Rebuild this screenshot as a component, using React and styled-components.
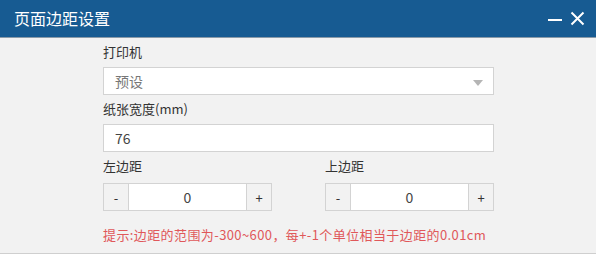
import styled, { createGlobalStyle } from "styled-components"

const Global = createGlobalStyle`
    html, body {
        margin: 0;
        padding: 0;
        background: #f2f2f2;
    }
    * {
        box-sizing: border-box;
    }
`

const Dialog = styled.div`
    width: 596px;
    height: 254px;
    background: #f2f2f2;
    font-family: "Microsoft YaHei", "Noto Sans CJK SC", sans-serif;
    display: flex;
    flex-direction: column;
`
const Header = styled.div`
    height: 38px;
    background: #175b92;
    border-bottom: 1px solid #8a9aa8;
    display: flex;
    align-items: center;
    justify-content: space-between;
    padding: 0 11px 0 14px;
    color: #fff;
`
const Title = styled.span`
    font-size: 16px;
    line-height: 20px;
    margin-top: -2px;
`
const Tools = styled.div`
    display: flex;
    align-items: center;
    gap: 8px;
`
const Body = styled.div`
    flex: 1;
    padding: 5px 0 0 103px;
    border-bottom: 1px solid #cfcfcf;
`
const Form = styled.div`
    width: 391px;
    display: flex;
    flex-direction: column;
`
const Label = styled.div`
    font-size: 13px;
    color: #333;
    line-height: 18px;
    height: 18px;
    margin-bottom: ${p => (p.$gap ? p.$gap : "6px")};
`
const Field = styled.div`
    position: relative;
    height: 28px;
    background: #fff;
    border: 1px solid #d3d3d3;
    display: flex;
    align-items: center;
    padding-left: 11px;
    font-size: 14px;
    color: ${p => (p.$muted ? "#777" : "#444")};
    margin-bottom: 5px;
`
const Arrow = styled.span`
    position: absolute;
    right: 10px;
    top: 12px;
    width: 0;
    height: 0;
    border-left: 5px solid transparent;
    border-right: 5px solid transparent;
    border-top: 6px solid #b5b5b5;
`
const Row = styled.div`
    display: flex;
    justify-content: space-between;
`
const Col = styled.div`
    width: 169px;
    display: flex;
    flex-direction: column;
`
const Stepper = styled.div`
    height: 28px;
    display: flex;
    border: 1px solid #d3d3d3;
    background: #fff;
`
const StepBtn = styled.div`
    width: 25px;
    background: #f2f2f2;
    display: flex;
    align-items: center;
    justify-content: center;
    font-size: 13px;
    color: #333;
    border-${p => (p.$side === "left" ? "right" : "left")}: 1px solid #d3d3d3;
`
const StepValue = styled.div`
    flex: 1;
    display: flex;
    align-items: center;
    justify-content: center;
    font-size: 14px;
    color: #444;
`
const Hint = styled.div`
    margin-top: 15px;
    font-size: 13px;
    letter-spacing: 0.4px;
    color: #e0585a;
    line-height: 18px;
    white-space: nowrap;
`

const MarginStepper = ({ label, value }) => (
    <Col>
        <Label $gap="8px">{label}</Label>
        <Stepper>
            <StepBtn $side="left">-</StepBtn>
            <StepValue>{value}</StepValue>
            <StepBtn $side="right">+</StepBtn>
        </Stepper>
    </Col>
)

export default function App() {
    return (
        <Dialog>
            <Global />
            <Header>
                <Title>页面边距设置</Title>
                <Tools>
                    <svg width="14" height="14" viewBox="0 0 14 14">
                        <path d="M0 8h14" stroke="#fff" strokeWidth="2" />
                    </svg>
                    <svg width="15" height="15" viewBox="0 0 15 15">
                        <path d="M1.5 1.5l12 12M13.5 1.5l-12 12" stroke="#fff" strokeWidth="2" />
                    </svg>
                </Tools>
            </Header>
            <Body>
                <Form>
                    <Label>打印机</Label>
                    <Field $muted>
                        预设
                        <Arrow />
                    </Field>
                    <Label>纸张宽度(mm)</Label>
                    <Field>76</Field>
                    <Row>
                        <MarginStepper label="左边距" value="0" />
                        <MarginStepper label="上边距" value="0" />
                    </Row>
                    <Hint>提示:边距的范围为-300~600，每+-1个单位相当于边距的0.01cm</Hint>
                </Form>
            </Body>
        </Dialog>
    )
}
